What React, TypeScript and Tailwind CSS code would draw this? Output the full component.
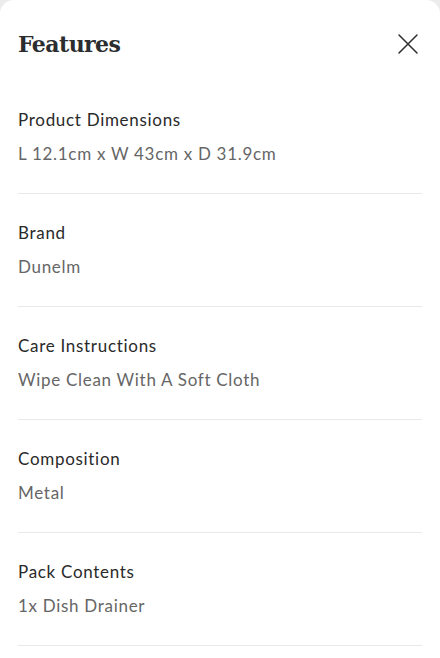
const FEATURES = [
  { label: 'Product Dimensions', value: 'L 12.1cm x W 43cm x D 31.9cm' },
  { label: 'Brand', value: 'Dunelm' },
  { label: 'Care Instructions', value: 'Wipe Clean With A Soft Cloth' },
  { label: 'Composition', value: 'Metal' },
  { label: 'Pack Contents', value: '1x Dish Drainer' },
];

export default function App() {
  return (
    <div className="w-[440px] h-[658px] bg-[#ececec] overflow-hidden">
      <div className="h-full bg-white rounded-t-[14px] font-['Lato','Noto_Sans',sans-serif]">
        {/* header */}
        <div className="flex items-center justify-between pl-[18px] pr-[20px] pt-[28px]">
          <h1 className="font-['DejaVu_Serif',serif] font-bold text-[22px] leading-[32px] tracking-tight text-[#2b2d2f]">
            Features
          </h1>
          <button aria-label="Close" className="w-[24px] h-[24px] flex items-center justify-center text-[#333]">
            <svg width="22" height="22" viewBox="0 0 22 22" fill="none" stroke="currentColor" strokeWidth="1.6" strokeLinecap="round">
              <path d="M2 2 L20 20 M20 2 L2 20" />
            </svg>
          </button>
        </div>

        {/* feature list */}
        <div className="mx-[18px] mt-[48px]">
          {FEATURES.map((f, i) => (
            <div key={f.label} className={`border-b border-[#e9e9e9] pb-[27px] ${i > 0 ? 'pt-[27px]' : ''}`}>
              <p className="text-[17px] leading-[24px] tracking-[0.7px] text-[#2a2a2a]">{f.label}</p>
              <p className="mt-[10px] text-[17px] leading-[24px] tracking-[0.7px] text-[#666]">{f.value}</p>
            </div>
          ))}
        </div>
      </div>
    </div>
  );
}
